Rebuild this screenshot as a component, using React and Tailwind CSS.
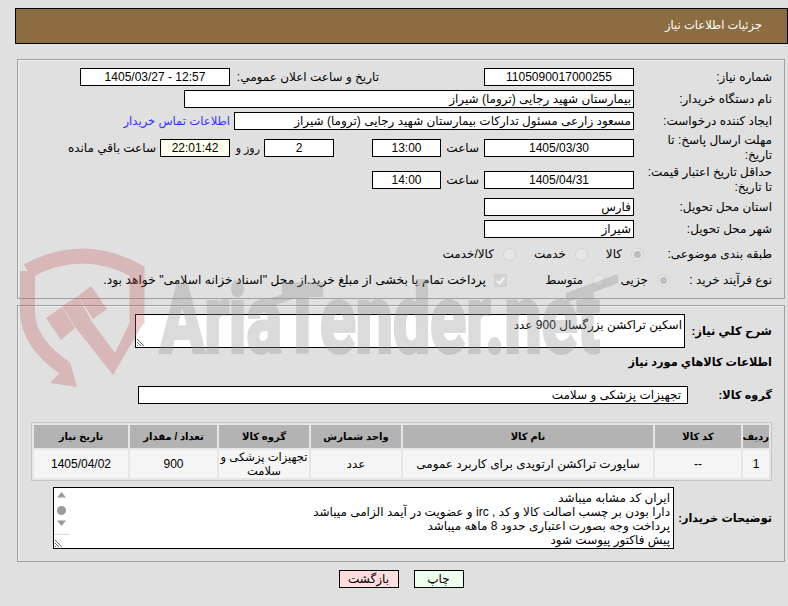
import React from 'react';

const FONT = 'font-["Liberation_Sans","DejaVu_Sans",sans-serif]';

const Field = ({ w, h = 'h-[18px]', align = 'text-center', bg = 'bg-white', children }) => (
    <div className={`${w} ${h} ${align} ${bg} shrink-0 border border-black text-[12px] leading-[16px] px-[2px] whitespace-nowrap overflow-hidden`}>
        {children}
    </div>
);

const Row = ({ h, label, labelW = 'w-[138px]', children }) => (
    <div className={`flex items-center ${h}`}>
        <div className={`${labelW} shrink-0 text-[12px] leading-[15px] whitespace-nowrap`}>{label}</div>
        {children}
    </div>
);

const Radio = ({ checked, w, children }) => (
    <div className={`${w} shrink-0 flex items-center gap-[9px] text-[12px] whitespace-nowrap`}>
        <span className="w-[13px] h-[13px] shrink-0 rounded-full bg-[#e6e6e6] border border-[#d2d2d2] flex items-center justify-center">
            {checked && <span className="w-[7px] h-[7px] rounded-full bg-[#bdbdbd]" />}
        </span>
        <span>{children}</span>
    </div>
);

const Resizer = () => (
    <svg className="absolute left-0 bottom-0" width="9" height="9" viewBox="0 0 9 9" stroke="#666" strokeWidth="1" fill="none">
        <path d="M1 1l7 7M1 4l4 4M1 7l1 1" />
    </svg>
);

// لوگوی پس زمینه
const Watermark = () => (
    <svg className="absolute inset-0 pointer-events-none" width="788" height="606" viewBox="0 0 788 606">
        <g opacity="0.3" fill="#c85c5c">
            <path
                d="M27.500 271V312C27.500 335 45 355 65 368M27.500 271Q82 241 137 271V324"
                fill="none" stroke="#c85c5c" strokeWidth="15"
            />
            <path d="M50 383L77 387L70 362Z" />
            <path d="M46 318L62 307L75 328L61 340Z" />
            <path d="M62 306L78 296L92 322L115 353L130 322H144L113 375L75 327Z" />
            <path d="M78 296L91 286L107 309L93 319Z" />
        </g>
        <g opacity="0.33" fill="#939393">
            <text
                x="160" y="352" direction="ltr" textLength="440" lengthAdjust="spacingAndGlyphs"
                fontFamily="Roboto, sans-serif" fontWeight="700" fontSize="94" stroke="#939393" strokeWidth="4"
            >
                AriaTender.net
            </text>
            <path d="M260 302L314 283V291L260 311Z" />
            <path d="M566 293L618 274V283L566 303Z" />
        </g>
    </svg>
);

const COLS = ['w-[26px]', 'w-[86px]', 'w-[250px]', 'w-[90px]', 'w-[90px]', 'w-[87px]', 'w-[94px]'];
const HEAD = ['رديف', 'کد کالا', 'نام کالا', 'واحد شمارش', 'گروه کالا', 'تعداد / مقدار', 'تاريخ نياز'];
const CELLS = [
    '1',
    '--',
    'ساپورت تراکشن ارتوپدی برای کاربرد عمومی',
    'عدد',
    <span className="text-[11.500px] whitespace-nowrap">تجهیزات پزشکی و<br />سلامت</span>,
    '900',
    '1405/04/02',
];

const App = () => {
    return (
        <div dir="rtl" className={`${FONT} relative w-[788px] h-[606px] overflow-hidden bg-[#e0e0e0] text-black pt-2`}>
            <div className="ml-[15px] h-[36px] bg-[#8c6d42] border border-black pr-[25px] flex items-center text-[11.500px] text-white">
                جزئیات اطلاعات نیاز
            </div>

            <div className="ml-[17px] mr-[3px] mt-[15px] h-[240px] border border-[#a0a0a0] shadow-[inset_1px_1px_0_#f0f0f0] pt-[6px] pr-3">
                <Row h="h-[22px]" label="شماره نیاز:">
                    <Field w="w-[150px]">1105090017000255</Field>
                    <div className="w-[149px] mr-[105px] shrink-0 text-[12px]">تاریخ و ساعت اعلان عمومي:</div>
                    <Field w="w-[150px]"><span dir="ltr">1405/03/27 - 12:57</span></Field>
                </Row>
                <Row h="h-[22px]" label="نام دستگاه خریدار:">
                    <Field w="w-[450px]" align="text-right">بیمارستان شهید رجایی (تروما) شیراز</Field>
                </Row>
                <Row h="h-[22px]" label="ایجاد کننده درخواست:">
                    <Field w="w-[400px]" align="text-right">مسعود زارعی مسئول تدارکات بیمارستان شهید رجایی (تروما) شیراز</Field>
                    <a className="mr-[4px] text-[11.600px] text-[#3333ff] whitespace-nowrap">اطلاعات تماس خریدار</a>
                </Row>
                <Row h="h-[32px]" label={<>مهلت ارسال پاسخ: تا<br />تاریخ:</>}>
                    <Field w="w-[150px]">1405/03/30</Field>
                    <div className="w-[43px] pr-[5px] shrink-0 text-[12px]">ساعت</div>
                    <Field w="w-[69px]">13:00</Field>
                    <Field w="w-[70px] mr-[38px]">2</Field>
                    <div className="w-[34px] pr-1 shrink-0 text-[11px]">روز و</div>
                    <Field w="w-[70px]" bg="bg-[#ffffee]">22:01:42</Field>
                    <div className="mr-1 text-[12px] whitespace-nowrap">ساعت باقي مانده</div>
                </Row>
                <Row h="h-[32px]" label={<>حداقل تاریخ اعتبار قیمت:<br />تا تاریخ:</>}>
                    <Field w="w-[150px]">1405/04/31</Field>
                    <div className="w-[43px] pr-[5px] shrink-0 text-[12px]">ساعت</div>
                    <Field w="w-[69px]">14:00</Field>
                </Row>
                <Row h="h-[22px]" label="استان محل تحویل:">
                    <Field w="w-[150px]" align="text-right">فارس</Field>
                </Row>
                <Row h="h-[22px]" label="شهر محل تحویل:">
                    <Field w="w-[150px]" align="text-right">شیراز</Field>
                </Row>
                <Row h="h-[28px]" label="طبقه بندی موضوعی:" labelW="w-[128px]">
                    <Radio checked w="w-[56px]">کالا</Radio>
                    <Radio w="w-[72px]">خدمت</Radio>
                    <Radio w="w-[80px]">کالا/خدمت</Radio>
                </Row>
                <Row h="h-[24px]" label="نوع فرآیند خرید :" labelW="w-[102px]">
                    <Radio checked w="w-[65px]">جزیی</Radio>
                    <Radio w="w-[98px]">متوسط</Radio>
                    <div className="flex items-center gap-2 text-[12.300px] whitespace-nowrap">
                        <span className="w-[13px] h-[13px] shrink-0 rounded-[2px] bg-[#d4d4d4] border border-[#cfcfcf] flex items-center justify-center">
                            <svg width="11" height="11" viewBox="0 0 11 11" fill="none" stroke="#f4f4f4" strokeWidth="2"><path d="M2 6l2.500 2.500L9 2.500" /></svg>
                        </span>
                        پرداخت تمام یا بخشی از مبلغ خرید.از محل "اسناد خزانه اسلامی" خواهد بود.
                    </div>
                </Row>
            </div>

            <div className="ml-[17px] mr-[3px] mt-[6px] h-[257px] border border-[#a0a0a0] shadow-[inset_1px_1px_0_#f0f0f0] pt-[8px] pr-3">
                <div className="flex items-center h-[34px]">
                    <div className="w-[87px] shrink-0 text-[11.600px] font-bold whitespace-nowrap">شرح کلي نياز:</div>
                    <div className="relative w-[550px] h-[34px] shrink-0 bg-white border border-black text-[12px] leading-[16px] px-[2px] pt-[2px]">
                        اسکین تراکشن بزرگسال 900 عدد
                        <Resizer />
                    </div>
                </div>
                <div className="mt-[5px] h-[18px] flex items-center text-[11.300px] font-bold">اطلاعات کالاهاي مورد نياز</div>
                <div className="mt-[15px] flex items-center h-[18px]">
                    <div className="w-[84px] shrink-0 text-[11.300px] font-bold">گروه کالا:</div>
                    <Field w="w-[550px]" align="text-right pr-[6px]">تجهیزات پزشکی و سلامت</Field>
                </div>
                <table className="mt-[18px] w-[741px] table-fixed border-separate border-spacing-[2px] border border-[#c4c4c4] bg-[#e6e6e6] text-[12px] text-center">
                    <thead>
                        <tr>
                            {HEAD.map((t, i) => (
                                <th key={t} className={`${COLS[i]} h-[23px] p-0 bg-[#b3b3b3] text-[10px] font-bold`}>{t}</th>
                            ))}
                        </tr>
                    </thead>
                    <tbody>
                        <tr>
                            {CELLS.map((t, i) => (
                                <td key={i} className="h-[28px] p-0 bg-[#f5f5f5] leading-[14px]">{t}</td>
                            ))}
                        </tr>
                    </tbody>
                </table>
                <div className="mt-[6px] flex items-center h-[62px]">
                    <div className="w-[98px] shrink-0 text-[11.300px] font-bold whitespace-nowrap">توضیحات خریدار:</div>
                    <div className="relative w-[621px] h-[62px] shrink-0 bg-white border border-black text-[12px] leading-[14px] px-[3px] pt-[3px] whitespace-nowrap overflow-hidden">
                        <div>ایران کد مشابه میباشد</div>
                        <div>دارا بودن بر چسب اصالت کالا و کد , irc و عضویت در آیمد الزامی میباشد</div>
                        <div>پرداخت وجه بصورت اعتباری حدود 8 ماهه میباشد</div>
                        <div>پیش فاکتور پیوست شود</div>
                        <div className="absolute left-0 top-0 bottom-0 w-[15px] bg-white">
                            <svg width="15" height="46" viewBox="0 0 15 46" fill="#9a9a9a">
                                <path d="M3 9.500L7.500 4L12 9.500Z" />
                                <circle cx="7.500" cy="22.500" r="4.500" />
                                <path d="M3 32.500H12L7.500 38Z" />
                            </svg>
                            <div className="border-t border-[#dcdcdc] h-[16px]" />
                            <Resizer />
                        </div>
                    </div>
                </div>
            </div>

            <div className="mt-[8px] mr-[3px] ml-[17px] flex justify-center gap-[15px]">
                <button className="w-[50px] h-[18px] bg-[#eeffee] border border-black text-[12px] leading-[14px]">چاپ</button>
                <button className="w-[60px] h-[18px] bg-[#ffdddd] border border-black text-[12px] leading-[14px]">بازگشت</button>
            </div>

            <Watermark />
        </div>
    );
};

export default App;
